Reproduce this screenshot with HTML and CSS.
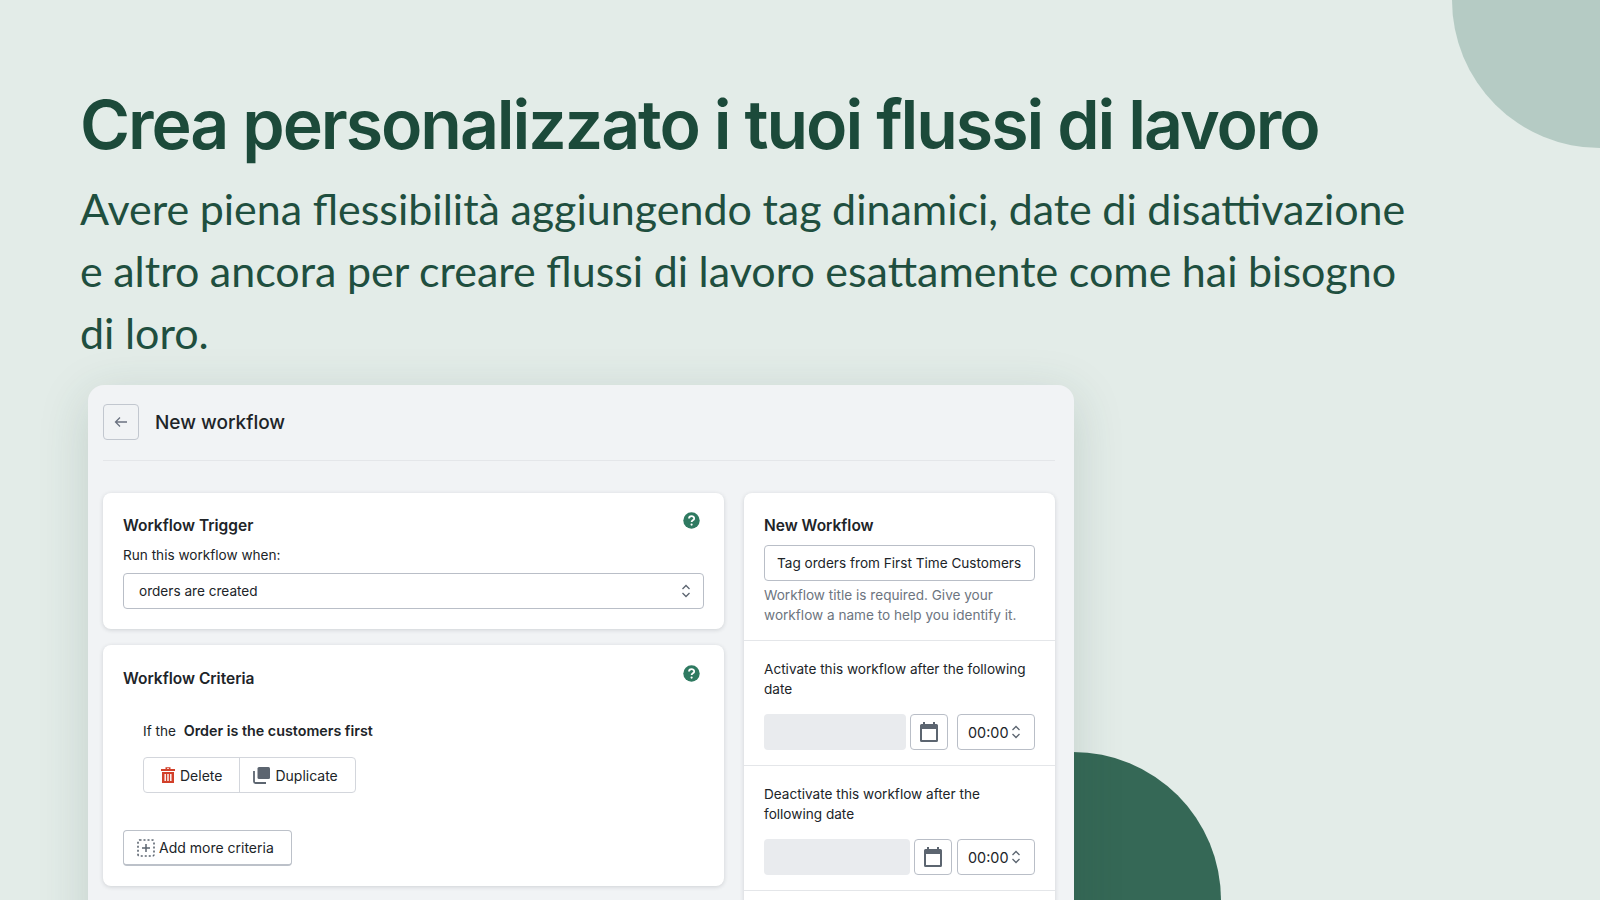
FILE: index.html
```html
<!DOCTYPE html>
<html lang="it">
<head>
    <meta charset="utf-8">
    <title>Crea personalizzato i tuoi flussi di lavoro</title>
    <link rel="stylesheet" href="styles.css">
</head>
<body>
    <div class="page">
        <div class="circle-top"></div>
        <div class="circle-bottom"></div>

        <h1 class="headline">Crea personalizzato i tuoi flussi di lavoro</h1>
        <p class="subline">Avere piena flessibilità aggiungendo tag dinamici, date di disattivazione<br>e altro ancora per creare flussi di lavoro esattamente come hai bisogno<br>di loro.</p>

        <div class="panel">
            <div class="panel-head">
                <button class="back-btn" type="button">
                    <svg width="16" height="16" viewBox="0 0 16 16" fill="none" stroke="#6b7280" stroke-width="1.3"><path d="M14 8H2.5M7 3.5 2.5 8 7 12.5"/></svg>
                </button>
                <h2 class="panel-title">New workflow</h2>
            </div>

            <div class="columns">
                <div class="left-col">
                    <div class="card trigger">
                        <div class="card-top">
                            <h3 class="card-title">Workflow Trigger</h3>
                            <svg class="help" width="17" height="17" viewBox="0 0 17 17"><circle cx="8.5" cy="8.5" r="8.2" fill="#2f7a61"/><path d="M6 6.6c0-3.2 5.2-3.2 5.2-.2 0 1.900-2.600 1.900-2.600 3.600" fill="none" stroke="#fff" stroke-width="1.800"/><circle cx="8.600" cy="12.600" r="1.100" fill="#fff"/></svg>
                        </div>
                        <div class="field-label">Run this workflow when:</div>
                        <div class="select">
                            <span>orders are created</span>
                            <svg width="10" height="16" viewBox="0 0 10 16" fill="none" stroke="#5c6570" stroke-width="1.300"><path d="M1.500 6 5 2.500 8.500 6M1.500 10 5 13.500 8.500 10"/></svg>
                        </div>
                    </div>

                    <div class="card criteria">
                        <div class="card-top">
                            <h3 class="card-title">Workflow Criteria</h3>
                            <svg class="help" width="17" height="17" viewBox="0 0 17 17"><circle cx="8.5" cy="8.5" r="8.2" fill="#2f7a61"/><path d="M6 6.6c0-3.2 5.2-3.2 5.2-.2 0 1.900-2.600 1.900-2.600 3.600" fill="none" stroke="#fff" stroke-width="1.800"/><circle cx="8.600" cy="12.600" r="1.100" fill="#fff"/></svg>
                        </div>
                        <div class="rule">
                            <div class="rule-text">If the <b>Order is the customers first</b></div>
                            <div class="btn-group">
                                <button class="btn btn-delete" type="button">
                                    <svg width="16" height="18" viewBox="0 0 16 18"><path d="M5.500 3V1.200h5V3H15v2H1V3zM7 2.300V3h2v-.7z" fill="#d2402a" fill-rule="evenodd"/><path d="M2 6h12v11H2zM4.500 8v7h1.400V8zM7.300 8v7h1.400V8zM10.100 8v7h1.400V8z" fill="#d2402a" fill-rule="evenodd"/></svg>
                                    Delete
                                </button>
                                <button class="btn btn-duplicate" type="button">
                                    <svg width="18" height="18" viewBox="0 0 18 18"><rect x="4.500" y="1" width="12.500" height="12" rx="1.500" fill="#5c6570"/><path d="M1 5v10.500A1.500 1.500 0 0 0 2.500 17H13" fill="none" stroke="#5c6570" stroke-width="1.800"/></svg>
                                    Duplicate
                                </button>
                            </div>
                        </div>
                        <button class="btn add-btn" type="button">
                            <svg width="18" height="18" viewBox="0 0 18 18" fill="none" stroke="#5c6570"><rect x="1" y="1" width="16" height="16" rx="1.500" stroke-width="1.600" stroke-dasharray="2 2"/><path d="M9 5v8M5 9h8" stroke-width="1.500"/></svg>
                            Add more criteria
                        </button>
                    </div>
                </div>

                <div class="card side">
                    <div class="side-section first">
                        <h3 class="card-title">New Workflow</h3>
                        <div class="text-input">Tag orders from First Time Customers</div>
                        <p class="hint">Workflow title is required. Give your workflow a name to help you identify it.</p>
                    </div>
                    <div class="side-section">
                        <p class="side-label">Activate this workflow after the following date</p>
                        <div class="date-row">
                            <div class="date-field"></div>
                            <button class="cal-btn" type="button">
                                <svg width="18" height="20" viewBox="0 0 18 20"><path d="M3 0h2v2h8V0h2v2h1.500A1.500 1.500 0 0 1 18 3.500v15a1.500 1.500 0 0 1-1.500 1.500h-15A1.500 1.500 0 0 1 0 18.500v-15A1.500 1.500 0 0 1 1.500 2H3zM2 7v11h14V7z" fill="#5c6570" fill-rule="evenodd"/></svg>
                            </button>
                            <div class="time-field">
                                <span>00:00</span>
                                <svg width="10" height="16" viewBox="0 0 10 16" fill="none" stroke="#5c6570" stroke-width="1.300"><path d="M1.500 6 5 2.500 8.500 6M1.500 10 5 13.500 8.500 10"/></svg>
                            </div>
                        </div>
                    </div>
                    <div class="side-section">
                        <p class="side-label">Deactivate this workflow after the following date</p>
                        <div class="date-row">
                            <div class="date-field wide"></div>
                            <button class="cal-btn" type="button">
                                <svg width="18" height="20" viewBox="0 0 18 20"><path d="M3 0h2v2h8V0h2v2h1.500A1.500 1.500 0 0 1 18 3.500v15a1.500 1.500 0 0 1-1.500 1.500h-15A1.500 1.500 0 0 1 0 18.500v-15A1.500 1.500 0 0 1 1.500 2H3zM2 7v11h14V7z" fill="#5c6570" fill-rule="evenodd"/></svg>
                            </button>
                            <div class="time-field">
                                <span>00:00</span>
                                <svg width="10" height="16" viewBox="0 0 10 16" fill="none" stroke="#5c6570" stroke-width="1.300"><path d="M1.500 6 5 2.500 8.500 6M1.500 10 5 13.500 8.500 10"/></svg>
                            </div>
                        </div>
                    </div>
                </div>
            </div>
        </div>
    </div>
</body>
</html>
```

FILE: styles.css
```css
* {
    box-sizing: border-box;
}

body {
    margin: 0;
    font-family: Inter, "Liberation Sans", sans-serif;
    color: #202428;
}

.page {
    position: relative;
    width: 1600px;
    height: 900px;
    padding: 82px 0 0 80px;
    overflow: hidden;
    background-color: #e3ece8;
}

.circle-top {
    position: absolute;
    top: -148px;
    right: -148px;
    width: 296px;
    height: 296px;
    border-radius: 50%;
    background-color: #b5cbc4;
}

.circle-bottom {
    position: absolute;
    top: 752px;
    left: 925px;
    width: 296px;
    height: 296px;
    border-radius: 50%;
    background-color: #356856;
}

.headline {
    margin: 0;
    font-family: Inter, sans-serif;
    font-size: 68px;
    font-weight: 600;
    line-height: 84px;
    letter-spacing: -2.07px;
    color: #1c4a3a;
}

.subline {
    margin: 12px 0 0;
    font-family: Lato, sans-serif;
    font-size: 43px;
    font-weight: 400;
    line-height: 62px;
    word-spacing: -0.5px;
    color: #1f4f3f;
}

.panel {
    position: relative;
    width: 986px;
    height: 600px;
    margin: 21px 0 0 8px;
    padding: 19px 19px 0 15px;
    border-radius: 16px;
    background-color: #f1f3f5;
    box-shadow: 0 12px 50px rgba(40, 80, 65, 0.18);
}

.panel-head {
    display: flex;
    align-items: flex-start;
    gap: 16px;
    height: 57px;
    border-bottom: 1px solid #e4e6e9;
}

.back-btn {
    display: flex;
    align-items: center;
    justify-content: center;
    width: 36px;
    height: 36px;
    padding: 0;
    border: 1px solid #c2c7cf;
    border-radius: 4px;
    background-color: #f1f3f5;
}

.panel-title {
    margin: 0;
    font-size: 19px;
    font-weight: 500;
    line-height: 38px;
}

.columns {
    display: flex;
    gap: 20px;
    margin-top: 32px;
}

.left-col {
    display: flex;
    flex-direction: column;
    gap: 16px;
    width: 621px;
}

.card {
    border-radius: 8px;
    background-color: #fff;
    box-shadow: 0 1px 4px rgba(30, 40, 50, 0.16);
}

.card-top {
    display: flex;
    justify-content: space-between;
    padding-right: 4px;
}

.card-title {
    margin: 0;
    font-size: 15.5px;
    font-weight: 600;
    line-height: 20px;
}

.help {
    margin-top: -4px;
}

.trigger {
    height: 136px;
    padding: 23px 20px 0;
}

.field-label {
    margin-top: 9px;
    font-size: 13.6px;
    line-height: 20px;
}

.select {
    display: flex;
    align-items: center;
    justify-content: space-between;
    height: 36px;
    margin-top: 8px;
    padding: 0 12px 0 15px;
    border: 1px solid #b9bec7;
    border-radius: 4px;
    font-size: 13.6px;
}

.criteria {
    height: 241px;
    padding: 24px 20px 0;
}

.rule {
    padding: 32px 0 0 20px;
}

.rule-text {
    font-size: 13.6px;
    line-height: 20px;
}

.rule-text b {
    margin-left: 4px;
    font-size: 14.3px;
    font-weight: 600;
}

.btn-group {
    display: inline-flex;
    margin-top: 16px;
    border: 1px solid #d3d6dc;
    border-radius: 4px;
}

.btn {
    display: inline-flex;
    align-items: center;
    gap: 4px;
    height: 34px;
    padding: 0 16px;
    border: 0;
    background: none;
    font-family: inherit;
    font-size: 14px;
    color: #202428;
}

.btn-delete {
    padding-right: 17px;
}

.btn-duplicate {
    padding: 0 17px 0 13px;
    border-left: 1px solid #d3d6dc;
}

.add-btn {
    height: 36px;
    margin-top: 37px;
    padding: 0 17px 0 13px;
    border: 1px solid #bcc1c9;
    border-bottom-width: 2px;
    border-radius: 4px;
}

.side {
    width: 311px;
    height: 520px;
}

.side-section {
    height: 125px;
    padding: 18px 20px 0;
    border-bottom: 1px solid #e4e6e9;
}

.side-section.first {
    height: 148px;
    padding-top: 23px;
}

.text-input {
    height: 36px;
    margin-top: 9px;
    padding: 0 12px;
    border: 1px solid #b9bec7;
    border-radius: 4px;
    font-size: 13.6px;
    line-height: 34px;
    white-space: nowrap;
}

.hint {
    margin: 4px 0 0;
    font-size: 13.6px;
    line-height: 20px;
    color: #6d7580;
}

.side-label {
    margin: 0;
    font-size: 13.6px;
    line-height: 20px;
}

.date-row {
    display: flex;
    gap: 4px;
    margin-top: 15px;
}

.date-field {
    flex-shrink: 0;
    width: 142px;
    height: 36px;
    border-radius: 4px;
    background-color: #e9ebee;
}

.date-field.wide {
    width: 146px;
}

.cal-btn {
    display: flex;
    flex-shrink: 0;
    align-items: center;
    justify-content: center;
    width: 38px;
    height: 36px;
    padding: 0;
    border: 1px solid #b9bec7;
    border-radius: 4px;
    background-color: #fff;
}

.time-field {
    display: flex;
    flex-shrink: 0;
    align-items: center;
    justify-content: space-between;
    width: 78px;
    height: 36px;
    margin-left: auto;
    padding: 0 13px 0 10px;
    border: 1px solid #b9bec7;
    border-radius: 4px;
    font-size: 14.4px;
}
```
